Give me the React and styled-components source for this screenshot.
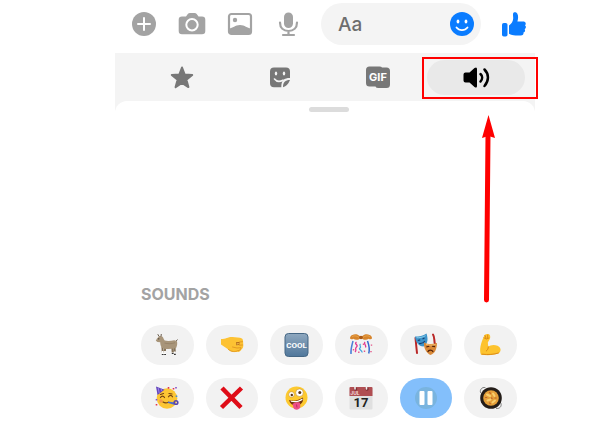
import React from 'react';
import styled, { createGlobalStyle } from 'styled-components';

const sounds = [
  { name: 'Goat', art: <Goat /> },
  { name: 'Fist bump', art: <Fist /> },
  { name: 'Cool', art: <Cool /> },
  { name: 'Confetti', art: <Confetti /> },
  { name: 'Drama', art: <Masks /> },
  { name: 'Flex', art: <Biceps /> },
  { name: 'Party', art: <Party /> },
  { name: 'Wrong', art: <Cross /> },
  { name: 'Zany', art: <Zany /> },
  { name: 'Calendar', art: <Calendar /> },
  { name: 'Pause', art: <Pause />, playing: true },
  { name: 'Paella', art: <Pan /> },
];

export default function App() {
  return (
    <Page>
      <GlobalStyle />
      <Composer>
        <Tools>
          <IconButton aria-label="More">
            <PlusIcon />
          </IconButton>
          <IconButton aria-label="Camera">
            <CameraIcon />
          </IconButton>
          <IconButton aria-label="Gallery">
            <PictureIcon />
          </IconButton>
          <IconButton aria-label="Microphone">
            <MicIcon />
          </IconButton>
        </Tools>
        <Field>
          <MessageInput type="text" placeholder="Aa" aria-label="Message" />
          <IconButton $active aria-label="Emoji">
            <SmileIcon />
          </IconButton>
        </Field>
        <IconButton $active aria-label="Like">
          <ThumbIcon />
        </IconButton>
      </Composer>
      <Picker>
        <Tabs>
          <Tab aria-label="Favourites">
            <StarIcon />
          </Tab>
          <Tab aria-label="Stickers">
            <StickerIcon />
          </Tab>
          <Tab aria-label="GIFs">
            <GifIcon />
          </Tab>
          <Marked>
            <Tab $selected aria-label="Sounds">
              <SpeakerIcon />
            </Tab>
            <Outline />
            <Arrow />
          </Marked>
        </Tabs>
        <Sheet>
          <Handle />
          <Title>SOUNDS</Title>
          <SoundGrid>
            {sounds.map(({ name, art, playing }) => (
              <Sound key={name} aria-label={name} $playing={playing}>
                {art}
              </Sound>
            ))}
          </SoundGrid>
        </Sheet>
      </Picker>
    </Page>
  );
}

/* toolbar icons */

function PlusIcon() {
  return (
    <svg width="26" height="26" viewBox="0 0 26 26">
      <circle cx="13" cy="13" r="12" fill="currentColor" />
      <path d="M13 7v12M7 13h12" stroke="#fff" strokeWidth="2" strokeLinecap="round" />
    </svg>
  );
}

function CameraIcon() {
  return (
    <svg width="28" height="26" viewBox="0 0 28 26">
      <path
        d="M4 5.500h4l1.800-2.400Q10.600 2 12 2h4.500q1.400 0 2.200 1.100L20.500 5.500H24q3.300 0 3.300 3.300V20q0 3.300-3.300 3.300H4Q.7 23.300.7 20V8.800Q.7 5.500 4 5.500z"
        fill="currentColor"
      />
      <circle cx="14" cy="13.700" r="5.700" fill="none" stroke="#fff" strokeWidth="2" />
    </svg>
  );
}

function PictureIcon() {
  return (
    <svg width="26" height="26" viewBox="0 0 26 26">
      <rect x="2" y="3" width="22" height="20" rx="2.500" fill="none" stroke="currentColor" strokeWidth="2.200" />
      <circle cx="8" cy="9" r="2.200" fill="currentColor" />
      <path d="M2 17.500c4-.3 6-3.500 11-3.500s7 3.200 11 3.500v4q0 1.500-2 1.500H4q-2 0-2-1.500z" fill="currentColor" />
    </svg>
  );
}

function MicIcon() {
  return (
    <svg width="26" height="26" viewBox="0 0 26 26">
      <rect x="9" y="1.500" width="9" height="15.500" rx="4.500" fill="currentColor" />
      <path
        d="M5 11.500c0 5.500 3.500 8.500 8.500 8.500s8.500-3 8.500-8.500M13.500 20v3.500M8 24h11"
        fill="none"
        stroke="currentColor"
        strokeWidth="2.200"
        strokeLinecap="round"
      />
    </svg>
  );
}

function SmileIcon() {
  return (
    <svg width="26" height="26" viewBox="0 0 26 26">
      <circle cx="13" cy="13" r="12" fill="currentColor" />
      <ellipse cx="9" cy="10.500" rx="1.400" ry="2" fill="#fff" />
      <ellipse cx="17" cy="10.500" rx="1.400" ry="2" fill="#fff" />
      <path d="M7.500 16.500c2.800 3.600 8.200 3.600 11 0" fill="none" stroke="#fff" strokeWidth="1.800" strokeLinecap="round" />
    </svg>
  );
}

function ThumbIcon() {
  return (
    <svg width="26" height="26" viewBox="0 0 26 26" fill="currentColor">
      <rect x="1" y="12" width="5.500" height="13.500" rx="1.800" />
      <path d="M8 14.500c2.600-1.700 4-4 4.200-7 .1-1.500-.4-3.200-.1-4.900.3-1.800 3-1.900 4.100-.2 1.400 2.200 1 5.300.2 8h5.900c2.300 0 3.300 2.400 1.700 3.900 1.400 1.200 1.200 3-.3 3.900.9 1.400.3 2.900-1.200 3.400.3 1.800-.8 2.900-2.800 2.900h-5.200c-2.600 0-4.400-.7-6.500-1.700z" />
    </svg>
  );
}

/* tab icons */

function StarIcon() {
  return (
    <svg width="26" height="26" viewBox="0 0 26 26">
      <path
        d="M13 2.500l2.700 7 7.500.4-5.800 4.800 2 7.400-6.400-4.100-6.400 4.100 2-7.400L2.800 9.900l7.500-.4z"
        fill="currentColor"
        stroke="currentColor"
        strokeWidth="2"
        strokeLinejoin="round"
      />
    </svg>
  );
}

function StickerIcon() {
  return (
    <svg width="26" height="26" viewBox="0 0 26 26">
      <path
        d="M7 2.500h12q4 0 4 4V13c-6 0-8.700 2.200-8.700 9.300H7q-4 0-4-4V6.500q0-4 4-4zM23 15c-4.800 0-7 2.400-7 7.300q4.800-1.600 7-7.300z"
        fill="currentColor"
      />
      <ellipse cx="9" cy="8.500" rx="1.200" ry="2" fill="#f4f4f4" />
      <ellipse cx="17" cy="8.500" rx="1.200" ry="2" fill="#f4f4f4" />
      <path d="M7.500 14c2 2.600 5 3 8.500 1.200" fill="none" stroke="#f4f4f4" strokeWidth="1.600" strokeLinecap="round" />
    </svg>
  );
}

function GifIcon() {
  return (
    <svg width="26" height="26" viewBox="0 0 26 26">
      <path
        d="M4.500 1.500h10q2 0 2.500 1h4.500q3.500 0 3.500 3.500v13.500q0 3.500-3.500 3.500h-8q-2.500 0-3-1.500h-6Q1 21.500 1 18V5q0-3.500 3.500-3.500z"
        fill="currentColor"
      />
      <IconText x="13" y="16" $size={11} fill="#fff">
        GIF
      </IconText>
    </svg>
  );
}

function SpeakerIcon() {
  return (
    <svg width="28" height="26" viewBox="0 0 28 26">
      <path
        d="M3.500 7.500h4L12.500 3q2.500-1.500 2.500 1v17q0 2.500-2.500 1l-5-4.500h-4q-2 0-2-2v-6q0-2 2-2z"
        fill="currentColor"
      />
      <path
        d="M18.500 9c2.200 2 2.200 5 0 7.500M22.500 4.500c4.600 4.600 4.600 11.400 0 16.500"
        fill="none"
        stroke="currentColor"
        strokeWidth="2.500"
        strokeLinecap="round"
      />
    </svg>
  );
}

function Arrow() {
  return (
    <ArrowSvg width="16" height="188" viewBox="0 0 16 188">
      <path d="M8 20L6.500 185" stroke="#f00" strokeWidth="5" strokeLinecap="round" />
      <path d="M8.500 0L15 23 8.500 21 2 23z" fill="#f00" />
    </ArrowSvg>
  );
}

/* sound art */

function Goat() {
  return (
    <svg width="26" height="26" viewBox="0 0 26 26">
      <path d="M8.400 14.500l.4 6M11.200 15l-.4 6M18.200 14l.5 6.500M20.500 14l.3 6.500" stroke="#857258" strokeWidth="2" />
      <path
        d="M3 6.500L5.500 4c2.500-.3 3.700 1 4.200 3l1 1.500c3.500.8 6.500.2 9.500-.3l2.600.8c.9 2 .3 4.800-.7 7-4.200.8-8.100 1.600-12.900.5-2.200-1-3-3.500-3-6.300L3.500 10 1.800 8.800z"
        fill="#a8957a"
      />
      <path d="M10.500 11c3 1 7.500 1 10.500-.3" fill="none" stroke="#937f65" strokeWidth=".8" />
      <path d="M5 4.500L3.800 2.200M7 4.500l.3-2.500M22.200 9l1.300-1.500" stroke="#6b5e50" strokeWidth="1" />
      <circle cx="4.800" cy="6.800" r=".6" fill="#222" />
      <path d="M8.700 19v3M11 19v3M20.800 19.500v2" stroke="#fff" strokeWidth="1.800" />
      <path d="M7.800 22.500h1.800M10.200 22.500H12M17.800 21.500h1.800M20 22.300h1.800" stroke="#333" strokeWidth="1.200" />
    </svg>
  );
}

function Fist() {
  return (
    <svg width="26" height="26" viewBox="0 0 26 26">
      <path
        d="M2 7C7 7 9 4.800 13.500 5l7.500.8q3 .5 3 3l.3 4.200c.1 2-.4 3.200-1.700 4.300-.8 1.700-2.200 2.900-4.400 2.500-4 .7-7.500-.4-9.500-2.800L2 12.500z"
        fill="#fdc233"
      />
      <path
        d="M9.500 17.500c3 2.600 7 2.500 9 1.200 2.800 0 3-1.500 3.500-3l-4 .3-4.500-1M20.500 10l3-.3M20.500 13.200l3-.2"
        fill="none"
        stroke="#e39a24"
        strokeWidth="1"
        strokeLinecap="round"
      />
      <path d="M17 10.300l3.500-.4-.2 3-3.300.4z" fill="#b0661a" />
      <path d="M17.500 12l2.300-.3" stroke="#ffd15a" strokeWidth="1" />
    </svg>
  );
}

function Cool() {
  return (
    <svg width="26" height="26" viewBox="0 0 26 26">
      <defs>
        <linearGradient id="cool" x2="0" y2="1">
          <stop stopColor="#8fa8bf" />
          <stop offset="1" stopColor="#50779b" />
        </linearGradient>
      </defs>
      <rect x="1" y="1.500" width="23" height="23" rx="3.500" fill="url(#cool)" stroke="#456785" />
      <IconText x="12.500" y="16" $size={8} $family="Roboto" fill="#fff">
        COOL
      </IconText>
    </svg>
  );
}

function Confetti() {
  return (
    <svg width="26" height="26" viewBox="0 0 26 26" fill="none">
      <path d="M5 9c-1 4-2.500 8-2 13" stroke="#4a7fd8" strokeWidth="1.500" />
      <path d="M19.500 9c1.500 4 2.500 8 1.200 12.500" stroke="#3568cf" strokeWidth="1.500" />
      <path d="M8.500 10c-3 2 2.500 3 0 5s1 3-1.500 5M17 10c-2 2 2 3 .5 5.500" stroke="#e3348f" strokeWidth="1.300" />
      <path d="M12.500 12c-2 1.500 1.500 2.500-.5 4s2.500 2 2 4.500" stroke="#43a5df" strokeWidth="1.300" />
      <path d="M5.500 17v1.500M10.800 19.500v1.500M15.500 11.500v1.500M16.500 18.500v1.500M23.500 12.500v1.200M23 19v1.200" stroke="#e45588" strokeWidth="1.400" />
      <path
        d="M12 4.300C9 1 4 2 2.500 4.500 1 7 3 8 5.500 6.700 7 8 10.500 8.500 12 6.500h2c1.500 2 5 1.500 6.500.2 2.500 1.300 4.500.3 3-2.200C22 2 17 1 14 4.300z"
        fill="#d6842c"
      />
      <path d="M4 5c2-2 5-1 7 .5M22 5c-2-2-5-1-7 .5" stroke="#e9a54a" strokeWidth="1" />
      <circle cx="13" cy="5.500" r="1.800" fill="#a95816" />
    </svg>
  );
}

function Masks() {
  return (
    <svg width="26" height="26" viewBox="0 0 26 26">
      <path
        d="M2.500 6c.5 5 .8 9 1.500 15M20 2.500c2 3 .8 6 2 10"
        fill="none"
        stroke="#b92727"
        strokeWidth="2"
        strokeLinecap="round"
      />
      <path d="M2 4.500C6 4.500 10 4 13.500 1.500c1.500 5 2 9.500-3 13C5.500 14.500 2.500 10 2 4.500z" fill="#3d93c9" />
      <path d="M3.500 5.700c3 .2 6-.4 9-2" stroke="#86cdea" fill="none" />
      <path
        d="M4.800 8.500l2.400-.6M9.500 7l2-1M6 11.500c2.500.4 4.500-.6 6-2.500"
        fill="none"
        stroke="#163f70"
        strokeWidth="1.200"
      />
      <path d="M11 10.500c4 2 8.500 2 13 .5-.2 6-2 10.500-6.500 12-4-2-7-6.500-6.500-12.500z" fill="#d98938" />
      <path d="M13.300 15l3-.8M19 14.200l3 .5" stroke="#532109" strokeWidth="1.200" />
      <path d="M14.700 20c1-2.500 4-2.500 5.500-.2" stroke="#532109" strokeWidth="1.200" fill="none" />
      <path d="M13 12.300c3 1 6 1 9.500.2" stroke="#f4c174" fill="none" />
    </svg>
  );
}

function Biceps() {
  return (
    <svg width="26" height="26" viewBox="0 0 26 26">
      <path
        d="M6.500 3c2-1.600 4.800-1.300 5.500.4.700 2-.2 3.300-.8 4.700L9.800 10.500l.5 4.300c2-2 6-2.600 9.200-1 3.600 1.700 4 5.300 1.500 7.200-4 2-10.500 2.700-18 1.700C.8 17.500 3.500 10 5 6.500z"
        fill="#fdc32e"
      />
      <path
        d="M6 5.800l2.300 1.200 2.600-1M7 3.500l1 2.500M9.700 3v3M10.300 14.800c0 2-.7 3.200-2 4.200M4 22.200c6 .7 12 .3 16.500-1.200"
        fill="none"
        stroke="#dc8b16"
        strokeWidth="1"
        strokeLinecap="round"
      />
    </svg>
  );
}

function Party() {
  return (
    <svg width="26" height="26" viewBox="0 0 26 26">
      <circle cx="13" cy="13.500" r="10.300" fill="#fcc634" />
      <path d="M2 1.500l8.500 3.300L3.500 10z" fill="#6446bd" />
      <path d="M4.200 3l1 5M7 3.500l.8 2.500" stroke="#9a83e6" strokeWidth="1" />
      <path
        d="M6.500 12.500c1-1.800 3-1.800 4 0M14.500 11.800c1-1.800 3-1.800 4 0M6.500 9.500l3-1M15 8.500l3 .5M9 17c1.500 1 3.500 1.200 5.500.3"
        fill="none"
        stroke="#754514"
        strokeWidth="1.200"
        strokeLinecap="round"
      />
      <circle cx="7" cy="16" r="1.800" fill="#f59a4a" />
      <path d="M14 16.500l7 1-1 2.300-6-1.800z" fill="#4f6dcb" />
      <circle cx="22" cy="17.500" r="1.800" fill="none" stroke="#5947ae" strokeWidth="1.600" />
      <path d="M22.500 10.500v1.500" stroke="#3d8fe0" strokeWidth="1.600" />
      <path d="M19.500 3v1.600M2.500 19v1.600M14.500 2v1.800" stroke="#e3364a" strokeWidth="1.600" />
      <path d="M22 2v1.600M2.500 14v1.500" stroke="#8450c9" strokeWidth="1.600" />
    </svg>
  );
}

function Cross() {
  return (
    <svg width="26" height="26" viewBox="0 0 26 26">
      <path d="M3 3l19 19.500M22.500 3L2.500 22.500" stroke="#df0d18" strokeWidth="4.500" />
    </svg>
  );
}

function Zany() {
  return (
    <svg width="26" height="26" viewBox="0 0 26 26">
      <circle cx="12.500" cy="12.500" r="11" fill="#fdc92f" />
      <circle cx="7.500" cy="9.500" r="2.800" fill="#fff" stroke="#b88324" strokeWidth=".5" />
      <circle cx="15.500" cy="7.700" r="3.800" fill="#fff" stroke="#b88324" strokeWidth=".5" />
      <circle cx="7.800" cy="10" r="1.200" fill="#5b3514" />
      <circle cx="15.800" cy="7.500" r="1.500" fill="#5b3514" />
      <path d="M5 15c5 1.500 9.500.5 14-2.500.8 4.500-2.200 7.500-6 8-4 .3-7-1.500-8-5.500z" fill="#71340d" />
      <path d="M6.500 15.500c4.500 1.300 8 .3 12-2V15c-4 2.300-7.500 2.800-11.500 1.800z" fill="#fff" />
      <path d="M8.500 19c2.500-1.800 5-2 7.500-1.200l.3 4c0 3-5.500 4-6.800 1.200z" fill="#ee4f86" />
      <path d="M12.500 19.500l.5 3" stroke="#bd2d62" strokeWidth="1" />
    </svg>
  );
}

function Calendar() {
  return (
    <svg width="26" height="26" viewBox="0 0 26 26">
      <rect x="1.500" y="2" width="23" height="22.500" rx="1" fill="#e0e0e0" />
      <path d="M1.500 3q0-1 1-1h21q1 0 1 1v8h-23z" fill="#b04e52" />
      <circle cx="7.500" cy="4" r="1.800" fill="#7d3034" />
      <circle cx="19" cy="4" r="1.800" fill="#7d3034" />
      <path d="M7 1v3M18.500 1v3" stroke="#f2eeee" strokeWidth="1.600" strokeLinecap="round" />
      <IconText x="7" y="10" $size={5} fill="#f3d8d8">
        JUL
      </IconText>
      <IconText x="13" y="22" $size={13} $family="Roboto" fill="#222">
        17
      </IconText>
    </svg>
  );
}

function Pause() {
  return (
    <svg width="26" height="26" viewBox="0 0 26 26">
      <circle cx="13" cy="13" r="11" fill="#79b4df" />
      <rect x="6.500" y="6" width="5" height="14" rx="1" fill="#fff" />
      <rect x="14.500" y="6" width="5" height="14" rx="1" fill="#fff" />
    </svg>
  );
}

function Pan() {
  return (
    <svg width="26" height="26" viewBox="0 0 26 26">
      <path
        d="M2.500 7.500C1.500 4.500 4 2 7 2.500M18.500 23.500c3 .5 5.500-2 4.500-5"
        fill="none"
        stroke="#777"
        strokeWidth="1"
        strokeLinecap="round"
      />
      <circle cx="13" cy="13" r="10.800" fill="#241d19" />
      <circle cx="13" cy="13" r="7.800" fill="#e5a03a" />
      <path d="M9 9.500l3 1.500M15 8.500l1.500 2.500M9.500 15.500l3-1M14.500 17.500l2.500-2" stroke="#f8cf70" strokeWidth="2" strokeLinecap="round" />
      <path d="M11.500 7.500l1 .8M17 13h1.200M11.500 18l.8.600M7.500 12.500h1.200M13.500 13l.5.500" stroke="#c0642a" strokeWidth="1.200" strokeLinecap="round" />
    </svg>
  );
}

const GlobalStyle = createGlobalStyle`
  * {
    box-sizing: border-box;
  }

  body {
    margin: 0;
    background: #fff;
    font-family: Inter, 'Liberation Sans', sans-serif;
  }

  button {
    padding: 0;
    border: 0;
    background: none;
    cursor: pointer;
  }
`;

const Page = styled.main`
  padding: 0 65px 0 115px;
`;

const Composer = styled.div`
  display: flex;
  align-items: center;
  gap: 20px;
  padding: 3px 8px 8px 16px;
`;

const Tools = styled.div`
  display: flex;
  gap: 22px;
`;

const IconButton = styled.button`
  display: flex;
  flex: none;
  align-items: center;
  justify-content: center;
  width: 26px;
  height: 26px;
  color: ${({ $active }) => ($active ? '#0a7cff' : '#a3a3a3')};

  svg {
    flex: none;
  }
`;

const Field = styled.div`
  display: flex;
  flex: 1;
  align-items: center;
  min-width: 0;
  height: 42px;
  padding: 0 6px 0 17px;
  border-radius: 21px;
  background: #f4f4f4;
`;

const MessageInput = styled.input`
  flex: 1;
  min-width: 0;
  padding: 0;
  border: 0;
  outline: 0;
  background: none;
  font: 500 19px Inter, 'Liberation Sans', sans-serif;

  &::placeholder {
    color: #6e6e6e;
    opacity: 1;
  }
`;

const Picker = styled.section`
  background: #f4f4f4;
`;

const Tabs = styled.nav`
  display: grid;
  grid-template-columns: repeat(4, 1fr);
  padding: 7px 10px 6px 18px;
`;

const Tab = styled.button`
  display: flex;
  align-items: center;
  justify-content: center;
  width: 100%;
  height: 35px;
  border-radius: 18px;
  color: ${({ $selected }) => ($selected ? '#000' : '#777')};

  && {
    background: ${({ $selected }) => ($selected ? '#e9e9e9' : 'none')};
  }
`;

const Marked = styled.div`
  position: relative;
`;

const Outline = styled.div`
  position: absolute;
  inset: -3px -13px -4px -5px;
  border: 2px solid #f00;
  pointer-events: none;
`;

const ArrowSvg = styled.svg`
  position: absolute;
  top: 55px;
  left: 53px;
  pointer-events: none;
`;

const Sheet = styled.div`
  padding: 6px 18px 18px 26px;
  border-radius: 12px 12px 0 0;
  background: #fff;
`;

const Handle = styled.div`
  width: 40px;
  height: 5px;
  margin: 0 auto;
  border-radius: 3px;
  background: #dcdcdc;
`;

const Title = styled.h2`
  margin: 172px 0 21px;
  color: #a3a3a3;
  font-size: 16px;
  font-weight: 700;
  line-height: 20px;
`;

const SoundGrid = styled.div`
  display: grid;
  grid-template-columns: repeat(6, 1fr);
  gap: 13px 12px;
`;

const Sound = styled.button`
  display: flex;
  align-items: center;
  justify-content: center;
  height: 40px;
  border-radius: 20px;

  && {
    background: ${({ $playing }) => ($playing ? '#83bffb' : '#f2f2f2')};
  }
`;

const IconText = styled.text`
  font-family: ${({ $family = 'Inter' }) => $family}, 'Liberation Sans', sans-serif;
  font-size: ${({ $size }) => $size}px;
  font-weight: 700;
  text-anchor: middle;
`;
